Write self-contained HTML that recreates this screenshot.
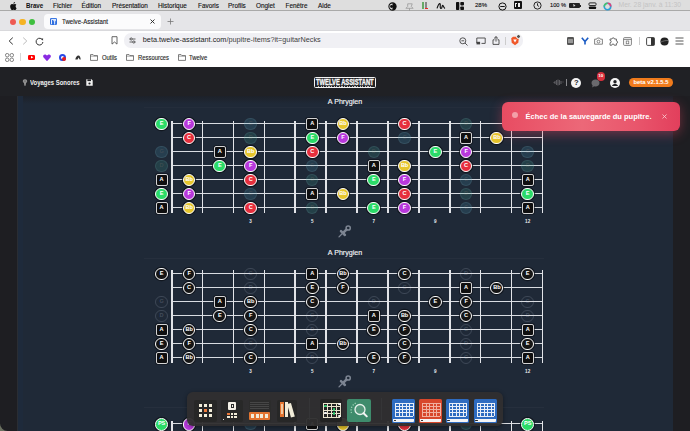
<!DOCTYPE html><html><head><meta charset="utf-8"><style>
*{margin:0;padding:0;box-sizing:border-box}
html,body{width:690px;height:431px;overflow:hidden;background:#1c1c1f;font-family:"Liberation Sans", sans-serif}
.a{position:absolute}
.str{position:absolute;height:1.1px;background:#d9dce1}
.fret{position:absolute;background:#e2e4e8}
.flab{position:absolute;width:20px;text-align:center;font-size:4.6px;font-weight:700;color:#e8eaee;line-height:8px}
.nt,.ghost,.ghost2,.sq{position:absolute;display:flex;align-items:center;justify-content:center;font-weight:700;color:#fff;font-size:5.6px;line-height:1;letter-spacing:-0.1px}
.nt{width:12.8px;height:12.8px;border-radius:50%;border:1px solid #fff;box-shadow:0 0 0 1.2px rgba(14,18,26,0.75)}
.sq{width:12.1px;height:12.1px;border-radius:2px;border:1.3px solid #d4d4d4;background:#0f0f10;box-shadow:0 0 0 1px rgba(14,18,26,0.6)}
.ghost{width:12.4px;height:12.4px;border-radius:50%;border:1px solid rgba(150,200,210,0.12);color:rgba(200,150,130,0.16)}
.ghost2{width:12.4px;height:12.4px;border-radius:50%;border:1px solid rgba(200,210,225,0.18);color:rgba(200,210,225,0.22)}
</style></head><body>

<div class="a" style="left:0;top:0;width:690px;height:10.6px;background:#dedede"></div>
<div class="a" style="left:0;top:10.4px;width:690px;height:0.8px;background:#a9a9a9"></div>
<svg class="a" style="left:9.5px;top:1.5px" width="7" height="8" viewBox="0 0 14 16"><path d="M11.2 8.5c0-2 1.6-2.9 1.7-3-.9-1.4-2.4-1.6-2.9-1.6-1.2-.1-2.4.7-3 .7-.6 0-1.6-.7-2.6-.7C3 4 1.7 4.8 1 6.1-.4 8.6.6 12.3 2 14.3c.7 1 1.5 2 2.5 2 1 0 1.4-.6 2.6-.6s1.5.6 2.6.6c1.1 0 1.8-1 2.4-2 .8-1.1 1.1-2.2 1.1-2.3 0 0-2-.8-2-3.5zM9.3 2.6C9.8 1.9 10.2 1 10.1 0c-.8 0-1.8.5-2.4 1.2-.5.6-1 1.5-.9 2.4.9.1 1.8-.4 2.5-1z" fill="#111"/></svg>
<div class="a" style="left:25.7px;top:2.48px;font-size:6.7px;line-height:8.04px;color:#111;font-weight:700;white-space:nowrap;transform:scaleX(0.93);transform-origin:0 50%">Brave</div>
<div class="a" style="left:53px;top:1.76px;font-size:6.4px;line-height:7.68px;color:#111;font-weight:400;white-space:nowrap;-webkit-text-stroke:0.12px #111">Fichier</div>
<div class="a" style="left:81.5px;top:1.76px;font-size:6.4px;line-height:7.68px;color:#111;font-weight:400;white-space:nowrap;-webkit-text-stroke:0.12px #111">Édition</div>
<div class="a" style="left:112px;top:1.76px;font-size:6.4px;line-height:7.68px;color:#111;font-weight:400;white-space:nowrap;-webkit-text-stroke:0.12px #111">Présentation</div>
<div class="a" style="left:158px;top:1.76px;font-size:6.4px;line-height:7.68px;color:#111;font-weight:400;white-space:nowrap;-webkit-text-stroke:0.12px #111">Historique</div>
<div class="a" style="left:198px;top:1.76px;font-size:6.4px;line-height:7.68px;color:#111;font-weight:400;white-space:nowrap;-webkit-text-stroke:0.12px #111">Favoris</div>
<div class="a" style="left:228px;top:1.76px;font-size:6.4px;line-height:7.68px;color:#111;font-weight:400;white-space:nowrap;-webkit-text-stroke:0.12px #111">Profils</div>
<div class="a" style="left:256px;top:1.76px;font-size:6.4px;line-height:7.68px;color:#111;font-weight:400;white-space:nowrap;-webkit-text-stroke:0.12px #111">Onglet</div>
<div class="a" style="left:285.5px;top:1.76px;font-size:6.4px;line-height:7.68px;color:#111;font-weight:400;white-space:nowrap;-webkit-text-stroke:0.12px #111">Fenêtre</div>
<div class="a" style="left:318px;top:1.76px;font-size:6.4px;line-height:7.68px;color:#111;font-weight:400;white-space:nowrap;-webkit-text-stroke:0.12px #111">Aide</div>
<svg class="a" style="left:388px;top:1.5px" width="9" height="9" viewBox="0 0 10 10"><circle cx="5" cy="5" r="4" fill="none" stroke="#111" stroke-width="1.2"/><path d="M5 1a4 4 0 0 1 0 8z" fill="#111"/><circle cx="4" cy="5" r="1.6" fill="#111"/></svg>
<svg class="a" style="left:405px;top:1.5px" width="9" height="9" viewBox="0 0 10 10"><path d="M3 2l5 0-1 3 2 2H1l2-2z M5 7v3" fill="none" stroke="#999" stroke-width="0.9"/></svg>
<div class="a" style="left:422px;top:2px;width:2px;height:7px;background:#6a6"></div><div class="a" style="left:425px;top:2px;width:2px;height:7px;background:#888"></div><div class="a" style="left:425px;top:7.5px;width:3px;height:1.5px;background:#e22"></div>
<svg class="a" style="left:436px;top:2px" width="10" height="8" viewBox="0 0 12 10"><path d="M1 8c1-3 2-6 3.5-6S4 8 6 8s1-4 2-4 1 3 3 4" fill="none" stroke="#111" stroke-width="1.4"/></svg>
<svg class="a" style="left:456px;top:2px" width="8" height="8" viewBox="0 0 8 8"><rect x="0" y="0" width="3.3" height="8" rx="0.8" fill="#111"/><rect x="4.3" y="0" width="3.7" height="3.4" rx="0.8" fill="#111"/><rect x="4.3" y="4.4" width="3.7" height="3.6" rx="0.8" fill="#111"/></svg>
<div class="a" style="left:475px;top:2.00px;font-size:6px;line-height:7.20px;color:#111;font-weight:400;white-space:nowrap;-webkit-text-stroke:0.12px #111">28%</div>
<svg class="a" style="left:498px;top:1.8px" width="9" height="9" viewBox="0 0 10 10"><circle cx="5" cy="5" r="4" fill="none" stroke="#111" stroke-width="1.1"/><path d="M2.5 5h5" stroke="#111" stroke-width="1.1"/></svg>
<div class="a" style="left:513.5px;top:1.4px;width:8px;height:7.6px;background:#111;border-radius:1px"></div><div class="a" style="left:515px;top:3.4px;width:2px;height:3.6px;border-left:0.8px solid #eee;border-top:0.8px solid #eee"></div><div class="a" style="left:518px;top:3.4px;width:2px;height:3.6px;border:0.8px solid #eee"></div>
<svg class="a" style="left:533px;top:1.2px" width="9" height="9" viewBox="0 0 10 10"><circle cx="5" cy="5" r="4" fill="none" stroke="#111" stroke-width="1"/><path d="M5 2.6V5l1.6 1" fill="none" stroke="#111" stroke-width="1"/></svg>
<div class="a" style="left:550px;top:2.18px;font-size:5.7px;line-height:6.84px;color:#111;font-weight:400;white-space:nowrap;-webkit-text-stroke:0.12px #111">100 %</div>
<div class="a" style="left:569px;top:2.8px;width:11px;height:5.4px;background:#222;border-radius:1px"></div><div class="a" style="left:572.5px;top:3.6px;width:3px;height:3.6px;background:#ddd;clip-path:polygon(60% 0,0 55%,45% 55%,35% 100%,100% 40%,55% 40%)"></div><div class="a" style="left:580.3px;top:4.6px;width:1px;height:2.2px;background:#222"></div>
<svg class="a" style="left:587.5px;top:1.8px" width="9" height="8" viewBox="0 0 10 9"><rect x="1" y="1" width="8" height="3" rx="1" fill="none" stroke="#111" stroke-width="1"/><rect x="1" y="5" width="8" height="3" rx="1" fill="#111"/></svg>
<svg class="a" style="left:602.5px;top:1.5px" width="9" height="9" viewBox="0 0 10 10"><circle cx="5" cy="5" r="3.6" fill="none" stroke="#2a9fd6" stroke-width="1.8"/><path d="M5 1.4A3.6 3.6 0 0 1 8.6 5" fill="none" stroke="#e0407a" stroke-width="1.8"/><path d="M1.4 5A3.6 3.6 0 0 1 5 1.4" fill="none" stroke="#46c46a" stroke-width="1.8"/></svg>
<div class="a" style="left:618.5px;top:1.32px;font-size:6.8px;line-height:8.16px;color:#c4c4c4;font-weight:400;white-space:nowrap;">Mer. 28 janv. à 11:30</div>
<div class="a" style="left:0;top:11.2px;width:690px;height:19.3px;background:#e5e5e8"></div>
<div class="a" style="left:9.9px;top:18.6px;width:6.2px;height:6.2px;border-radius:50%;background:#ee5a52"></div>
<div class="a" style="left:19.4px;top:18.6px;width:6.2px;height:6.2px;border-radius:50%;background:#f5b324"></div>
<div class="a" style="left:29.1px;top:18.6px;width:6.2px;height:6.2px;border-radius:50%;background:#3fbf3f"></div>
<div class="a" style="left:43.7px;top:14px;width:117px;height:15px;background:#fbfbfc;border-radius:4px 4px 4px 4px"></div>
<div class="a" style="left:49.8px;top:17.8px;width:7.6px;height:7.6px;background:#2f6fe0;border-radius:1.2px"></div>
<svg class="a" style="left:49.8px;top:17.8px" width="7.6" height="7.6" viewBox="0 0 8 8"><path d="M1.6 6.6V1.5h4.8M3.4 2.8h3M4.9 2.8v4" fill="none" stroke="#fff" stroke-width="0.95"/></svg>
<div class="a" style="left:61.5px;top:17.64px;font-size:6.6px;line-height:7.92px;color:#222;font-weight:400;white-space:nowrap;-webkit-text-stroke:0.12px #222;transform:scaleX(0.93);transform-origin:0 50%">Twelve-Assistant</div>
<svg class="a" style="left:150px;top:19.2px" width="5" height="5" viewBox="0 0 5 5"><path d="M0.5 0.5l4 4M4.5 0.5l-4 4" stroke="#222" stroke-width="0.9"/></svg>
<svg class="a" style="left:166.7px;top:18.2px" width="7" height="7" viewBox="0 0 7 7"><path d="M3.5 0.5v6M0.5 3.5h6" stroke="#777" stroke-width="0.8"/></svg>
<div class="a" style="left:0;top:30.5px;width:690px;height:36.5px;background:#ffffff"></div>
<div class="a" style="left:0;top:30.3px;width:690px;height:0.7px;background:#d9d9dc"></div>
<svg class="a" style="left:7.5px;top:36.8px" width="6" height="8" viewBox="0 0 6 8"><path d="M4.8 0.6L1.2 4l3.6 3.4" fill="none" stroke="#333" stroke-width="1"/></svg>
<svg class="a" style="left:22px;top:36.8px" width="6" height="8" viewBox="0 0 6 8"><path d="M1.2 0.6L4.8 4 1.2 7.4" fill="none" stroke="#bbb" stroke-width="1"/></svg>
<svg class="a" style="left:34.5px;top:36.5px" width="9" height="9" viewBox="0 0 9 9"><path d="M7.6 3.2A3.4 3.4 0 1 0 7.9 5" fill="none" stroke="#333" stroke-width="1"/><path d="M6.2 1.6L8.2 1.4 7.9 3.6z" fill="#333"/></svg>
<svg class="a" style="left:110.5px;top:36.3px" width="7" height="9" viewBox="0 0 7 9"><path d="M1 0.7h5v7.4L3.5 6 1 8.1z" fill="none" stroke="#555" stroke-width="0.9"/></svg>
<div class="a" style="left:124.4px;top:32.9px;width:399px;height:15.2px;background:#f0f0f4;border-radius:7px"></div>
<svg class="a" style="left:128.6px;top:37.3px" width="7" height="7" viewBox="0 0 7 7"><path d="M0.5 2h6M0.5 5h6" stroke="#444" stroke-width="0.8"/><circle cx="2.2" cy="2" r="1.1" fill="#f0f0f4" stroke="#444" stroke-width="0.8"/><circle cx="4.8" cy="5" r="1.1" fill="#f0f0f4" stroke="#444" stroke-width="0.8"/></svg>
<div class="a" style="left:142.8px;top:36.34px;font-size:7.27px;line-height:8.72px;color:#1c1c1c;font-weight:400;white-space:nowrap;">beta.twelve-assistant.com<span style="color:#404040">/pupitre-items?it=guitarNecks</span></div>
<svg class="a" style="left:459px;top:36.5px" width="9" height="9" viewBox="0 0 9 9"><circle cx="3.8" cy="3.8" r="3" fill="none" stroke="#444" stroke-width="0.9"/><path d="M6 6l2.5 2.5M2.4 3.8h2.8" stroke="#444" stroke-width="0.9"/></svg>
<svg class="a" style="left:475.5px;top:37px" width="10" height="8" viewBox="0 0 10 8"><path d="M0.8 6V1h8.4v5.4H5.5" fill="none" stroke="#444" stroke-width="0.9"/><rect x="0.5" y="4.8" width="3.6" height="2.6" fill="#444"/></svg>
<svg class="a" style="left:492px;top:36px" width="8" height="9" viewBox="0 0 8 9"><path d="M4 0.6v5M2 2.5L4 0.6 6 2.5M2.5 3.8H1v4.6h6V3.8H5.5" fill="none" stroke="#444" stroke-width="0.9"/></svg>
<div class="a" style="left:505px;top:37px;width:0.7px;height:8px;background:#ccc"></div>
<svg class="a" style="left:509.5px;top:35.5px" width="10" height="10" viewBox="0 0 10 10"><path d="M1.2 2.2L3 0.8h4l1.8 1.4-0.5 4.5L5 9.2 1.7 6.7z" fill="#f0582a"/><path d="M3.2 3.4h3.6L5 6.6z" fill="#fff"/></svg>
<div class="a" style="left:515.5px;top:34.2px;width:5px;height:5px;background:#555;border-radius:50%;border:0.6px solid #fff"></div>
<div class="a" style="left:566.5px;top:37px;width:7.5px;height:7.5px;background:#555;border-radius:1.3px"></div><div class="a" style="left:568px;top:38.5px;width:4.5px;height:4.5px;background:#999;border-radius:0.5px"></div>
<svg class="a" style="left:581px;top:37px" width="8" height="8" viewBox="0 0 8 8"><path d="M0.8 0.8L4 4.6 7.2 0.8M4 4.6V7.6" fill="none" stroke="#1a5bc4" stroke-width="1.6"/></svg>
<svg class="a" style="left:594px;top:37px" width="9" height="8" viewBox="0 0 9 8"><path d="M0.6 2.2h2l0.8-1.2h2.2l0.8 1.2h2v5H0.6z" fill="none" stroke="#666" stroke-width="0.8"/><circle cx="4.5" cy="4.6" r="1.4" fill="none" stroke="#666" stroke-width="0.8"/></svg>
<svg class="a" style="left:608.5px;top:36px" width="10" height="10" viewBox="0 0 10 10"><path d="M1 3h2a1.2 1.2 0 1 1 2.4 0h2v2a1.2 1.2 0 1 1 0 2.4V9.2H5.2a1.2 1.2 0 1 0-2.4 0H1V6.8a1.2 1.2 0 1 0 0-2.4z" fill="none" stroke="#555" stroke-width="0.85"/></svg>
<svg class="a" style="left:623px;top:36.6px" width="9" height="9" viewBox="0 0 9 9"><rect x="0.6" y="0.6" width="7.8" height="7.8" rx="1" fill="none" stroke="#666" stroke-width="0.8"/><path d="M0.6 2.4h7.8" stroke="#666" stroke-width="0.8"/><rect x="3.2" y="4" width="2.6" height="2.8" fill="none" stroke="#666" stroke-width="0.7"/></svg>
<div class="a" style="left:639px;top:37px;width:0.7px;height:8px;background:#ccc"></div>
<svg class="a" style="left:646px;top:36.6px" width="9" height="9" viewBox="0 0 9 9"><rect x="0.6" y="0.6" width="7.8" height="7.8" rx="1" fill="none" stroke="#333" stroke-width="0.9"/><rect x="5" y="0.6" width="3.4" height="7.8" fill="#333"/></svg>
<svg class="a" style="left:660px;top:36.5px" width="9" height="9" viewBox="0 0 9 9"><circle cx="4.5" cy="4.5" r="4.1" fill="#222"/><path d="M0.6 5.2C3 4 6 3.2 8.4 3.6" stroke="#aaa" stroke-width="0.5" fill="none"/></svg>
<svg class="a" style="left:674.5px;top:37px" width="9" height="8" viewBox="0 0 9 8"><path d="M0.5 1h8M0.5 4h8M0.5 7h8" stroke="#444" stroke-width="0.9"/></svg>
<svg class="a" style="left:5px;top:53px" width="9" height="9" viewBox="0 0 9 9"><g fill="none" stroke="#666" stroke-width="0.8"><rect x="0.5" y="0.5" width="3.4" height="3.4" rx="1.5"/><rect x="5.1" y="0.5" width="3.4" height="3.4" rx="1.5"/><rect x="0.5" y="5.1" width="3.4" height="3.4" rx="1.5"/><rect x="5.1" y="5.1" width="3.4" height="3.4" rx="1.5"/></g></svg>
<div class="a" style="left:20.2px;top:53px;width:0.6px;height:8px;background:#d6d6d6"></div>
<div class="a" style="left:27.8px;top:55px;width:7.6px;height:5px;background:#f00;border-radius:1.3px"></div><svg class="a" style="left:30.6px;top:56.3px" width="3" height="3" viewBox="0 0 3 3"><path d="M0 0l2.4 1.3L0 2.6z" fill="#fff"/></svg>
<svg class="a" style="left:43px;top:53.8px" width="8" height="7.5" viewBox="0 0 8 7.5"><path d="M4 7.2L0.6 3.6C-0.4 2 0.4 0.4 1.9 0.4 2.9 0.4 3.6 1 4 1.6 4.4 1 5.1 0.4 6.1 0.4 7.6 0.4 8.4 2 7.4 3.6z" fill="#8a2be2"/></svg>
<div class="a" style="left:58.6px;top:53.8px;width:7.4px;height:7.4px;border-radius:50%;border:2px solid #2848e8"></div><div class="a" style="left:61.8px;top:56.8px;width:4.4px;height:4.4px;border-radius:50%;background:#e51c1c"></div>
<svg class="a" style="left:74.8px;top:55px" width="6" height="5" viewBox="0 0 6 5"><path d="M0.3 4.6C0.6 2 2 0.4 3.4 0.4S5.6 2 5.7 4.6H4.6L3.6 2.4 2.6 4.6z" fill="#333"/></svg>
<svg class="a" style="left:90px;top:54.2px" width="8" height="7" viewBox="0 0 8 7"><path d="M0.5 0.6h2.6l0.8 1h3.6v4.8H0.5z" fill="none" stroke="#555" stroke-width="0.75"/><path d="M0.5 2.2h7" stroke="#555" stroke-width="0.5"/></svg>
<div class="a" style="left:101.9px;top:54.16px;font-size:6.4px;line-height:7.68px;color:#262626;font-weight:400;white-space:nowrap;-webkit-text-stroke:0.12px #262626;transform:scaleX(0.92);transform-origin:0 50%">Outils</div>
<svg class="a" style="left:126px;top:54.2px" width="8" height="7" viewBox="0 0 8 7"><path d="M0.5 0.6h2.6l0.8 1h3.6v4.8H0.5z" fill="none" stroke="#555" stroke-width="0.75"/><path d="M0.5 2.2h7" stroke="#555" stroke-width="0.5"/></svg>
<div class="a" style="left:137.7px;top:54.16px;font-size:6.4px;line-height:7.68px;color:#262626;font-weight:400;white-space:nowrap;-webkit-text-stroke:0.12px #262626;transform:scaleX(0.92);transform-origin:0 50%">Ressources</div>
<svg class="a" style="left:177.5px;top:54.2px" width="8" height="7" viewBox="0 0 8 7"><path d="M0.5 0.6h2.6l0.8 1h3.6v4.8H0.5z" fill="none" stroke="#555" stroke-width="0.75"/><path d="M0.5 2.2h7" stroke="#555" stroke-width="0.5"/></svg>
<div class="a" style="left:189.3px;top:54.16px;font-size:6.4px;line-height:7.68px;color:#262626;font-weight:400;white-space:nowrap;-webkit-text-stroke:0.12px #262626;transform:scaleX(0.92);transform-origin:0 50%">Twelve</div>
<div class="a" style="left:0;top:66.6px;width:690px;height:0.9px;background:#0e0e10"></div>

<div class="a" style="left:0;top:67px;width:690px;height:364px;background:#1e1e22"></div>
<div class="a" style="left:0;top:67px;width:690px;height:29px;background:#202125"></div>
<div class="a" style="left:17px;top:96px;width:655.5px;height:335px;background:#1f2937"></div>
<div class="a" style="left:17px;top:96px;width:655.5px;height:8px;background:linear-gradient(180deg,#1d2129,rgba(31,41,55,0))"></div>
<div class="a" style="left:16.5px;top:96px;width:1.5px;height:335px;background:#2a2d33"></div>
<div class="a" style="left:18px;top:96px;width:4.5px;height:335px;background:#1e2a3b"></div>
<div class="a" style="left:143.5px;top:107.2px;width:400px;height:0.9px;background:#242d3b"></div>
<div class="a" style="left:143.5px;top:257.9px;width:400px;height:0.9px;background:#262f3d"></div>
<div class="a" style="left:144px;top:407.2px;width:400px;height:0.9px;background:#262f3d"></div>

<div class="a" style="left:0;top:99.2px;width:690px;text-align:center;font-size:7.1px;color:#f2f3f5;-webkit-text-stroke:0.15px #f2f3f5;line-height:7px">A Phrygien</div>
<div class="str" style="top:123.00px;left:171.70px;width:370.68px"></div>
<div class="str" style="top:137.00px;left:171.70px;width:370.68px"></div>
<div class="str" style="top:151.00px;left:171.70px;width:370.68px"></div>
<div class="str" style="top:165.00px;left:171.70px;width:370.68px"></div>
<div class="str" style="top:179.00px;left:171.70px;width:370.68px"></div>
<div class="str" style="top:193.00px;left:171.70px;width:370.68px"></div>
<div class="str" style="top:207.00px;left:171.70px;width:370.68px"></div>
<div class="fret" style="left:170.80px;top:120.50px;height:92.20px;width:1.8px"></div>
<div class="fret" style="left:201.79px;top:120.50px;height:92.20px;width:1.6px"></div>
<div class="fret" style="left:232.68px;top:120.50px;height:92.20px;width:1.6px"></div>
<div class="fret" style="left:263.57px;top:120.50px;height:92.20px;width:1.6px"></div>
<div class="fret" style="left:294.46px;top:120.50px;height:92.20px;width:1.6px"></div>
<div class="fret" style="left:325.35px;top:120.50px;height:92.20px;width:1.6px"></div>
<div class="fret" style="left:356.24px;top:120.50px;height:92.20px;width:1.6px"></div>
<div class="fret" style="left:387.13px;top:120.50px;height:92.20px;width:1.6px"></div>
<div class="fret" style="left:418.02px;top:120.50px;height:92.20px;width:1.6px"></div>
<div class="fret" style="left:448.91px;top:120.50px;height:92.20px;width:1.6px"></div>
<div class="fret" style="left:479.80px;top:120.50px;height:92.20px;width:1.6px"></div>
<div class="fret" style="left:510.69px;top:120.50px;height:92.20px;width:1.6px"></div>
<div class="fret" style="left:541.58px;top:120.50px;height:92.20px;width:1.6px"></div>
<div class="flab" style="left:240.64px;top:217.70px">3</div>
<div class="flab" style="left:302.20px;top:217.70px">5</div>
<div class="flab" style="left:363.76px;top:217.70px">7</div>
<div class="flab" style="left:425.32px;top:217.70px">9</div>
<div class="flab" style="left:517.66px;top:217.70px">12</div>
<div class="nt" style="left:155.20px;top:117.70px;background:#2bdb68"><span>E</span></div>
<div class="nt" style="left:182.68px;top:117.70px;background:#b838dc"><span>F</span></div>
<div class="ghost" style="left:244.44px;top:117.90px;background:rgba(70,150,175,0.2)"><span>G</span></div>
<div class="sq" style="left:306.15px;top:118.05px"><span>A</span></div>
<div class="nt" style="left:336.58px;top:117.70px;background:#e6c52b"><span>Bb</span></div>
<div class="nt" style="left:398.14px;top:117.70px;background:#e62f3d"><span>C</span></div>
<div class="ghost" style="left:459.90px;top:117.90px;background:rgba(60,160,140,0.2)"><span>D</span></div>
<div class="nt" style="left:521.26px;top:117.70px;background:#2bdb68"><span>E</span></div>
<div class="nt" style="left:182.68px;top:131.70px;background:#e62f3d"><span>C</span></div>
<div class="ghost" style="left:244.44px;top:131.90px;background:rgba(60,160,140,0.2)"><span>D</span></div>
<div class="nt" style="left:305.80px;top:131.70px;background:#2bdb68"><span>E</span></div>
<div class="nt" style="left:336.58px;top:131.70px;background:#b838dc"><span>F</span></div>
<div class="ghost" style="left:398.34px;top:131.90px;background:rgba(70,150,175,0.2)"><span>G</span></div>
<div class="sq" style="left:460.05px;top:132.05px"><span>A</span></div>
<div class="nt" style="left:490.48px;top:131.70px;background:#e6c52b"><span>Bb</span></div>
<div class="ghost" style="left:155.40px;top:145.90px;background:rgba(70,150,175,0.2)"><span>G</span></div>
<div class="sq" style="left:213.81px;top:146.05px"><span>A</span></div>
<div class="nt" style="left:244.24px;top:145.70px;background:#e6c52b"><span>Bb</span></div>
<div class="nt" style="left:305.80px;top:145.70px;background:#e62f3d"><span>C</span></div>
<div class="ghost" style="left:367.56px;top:145.90px;background:rgba(60,160,140,0.2)"><span>D</span></div>
<div class="nt" style="left:428.92px;top:145.70px;background:#2bdb68"><span>E</span></div>
<div class="nt" style="left:459.70px;top:145.70px;background:#b838dc"><span>F</span></div>
<div class="ghost" style="left:521.46px;top:145.90px;background:rgba(70,150,175,0.2)"><span>G</span></div>
<div class="ghost" style="left:155.40px;top:159.90px;background:rgba(60,160,140,0.2)"><span>D</span></div>
<div class="nt" style="left:213.46px;top:159.70px;background:#2bdb68"><span>E</span></div>
<div class="nt" style="left:244.24px;top:159.70px;background:#b838dc"><span>F</span></div>
<div class="ghost" style="left:306.00px;top:159.90px;background:rgba(70,150,175,0.2)"><span>G</span></div>
<div class="sq" style="left:367.71px;top:160.05px"><span>A</span></div>
<div class="nt" style="left:398.14px;top:159.70px;background:#e6c52b"><span>Bb</span></div>
<div class="nt" style="left:459.70px;top:159.70px;background:#e62f3d"><span>C</span></div>
<div class="ghost" style="left:521.46px;top:159.90px;background:rgba(60,160,140,0.2)"><span>D</span></div>
<div class="sq" style="left:155.55px;top:174.05px"><span>A</span></div>
<div class="nt" style="left:182.68px;top:173.70px;background:#e6c52b"><span>Bb</span></div>
<div class="nt" style="left:244.24px;top:173.70px;background:#e62f3d"><span>C</span></div>
<div class="ghost" style="left:306.00px;top:173.90px;background:rgba(60,160,140,0.2)"><span>D</span></div>
<div class="nt" style="left:367.36px;top:173.70px;background:#2bdb68"><span>E</span></div>
<div class="nt" style="left:398.14px;top:173.70px;background:#b838dc"><span>F</span></div>
<div class="ghost" style="left:459.90px;top:173.90px;background:rgba(70,150,175,0.2)"><span>G</span></div>
<div class="sq" style="left:521.61px;top:174.05px"><span>A</span></div>
<div class="nt" style="left:155.20px;top:187.70px;background:#2bdb68"><span>E</span></div>
<div class="nt" style="left:182.68px;top:187.70px;background:#b838dc"><span>F</span></div>
<div class="ghost" style="left:244.44px;top:187.90px;background:rgba(70,150,175,0.2)"><span>G</span></div>
<div class="sq" style="left:306.15px;top:188.05px"><span>A</span></div>
<div class="nt" style="left:336.58px;top:187.70px;background:#e6c52b"><span>Bb</span></div>
<div class="nt" style="left:398.14px;top:187.70px;background:#e62f3d"><span>C</span></div>
<div class="ghost" style="left:459.90px;top:187.90px;background:rgba(60,160,140,0.2)"><span>D</span></div>
<div class="nt" style="left:521.26px;top:187.70px;background:#2bdb68"><span>E</span></div>
<div class="sq" style="left:155.55px;top:202.05px"><span>A</span></div>
<div class="nt" style="left:182.68px;top:201.70px;background:#e6c52b"><span>Bb</span></div>
<div class="nt" style="left:244.24px;top:201.70px;background:#e62f3d"><span>C</span></div>
<div class="ghost" style="left:306.00px;top:201.90px;background:rgba(60,160,140,0.2)"><span>D</span></div>
<div class="nt" style="left:367.36px;top:201.70px;background:#2bdb68"><span>E</span></div>
<div class="nt" style="left:398.14px;top:201.70px;background:#b838dc"><span>F</span></div>
<div class="ghost" style="left:459.90px;top:201.90px;background:rgba(70,150,175,0.2)"><span>G</span></div>
<div class="sq" style="left:521.61px;top:202.05px"><span>A</span></div>
<div class="a" style="left:0;top:250px;width:690px;text-align:center;font-size:7.1px;color:#f2f3f5;-webkit-text-stroke:0.15px #f2f3f5;line-height:7px">A Phrygien</div>
<div class="str" style="top:272.90px;left:171.70px;width:370.68px"></div>
<div class="str" style="top:286.90px;left:171.70px;width:370.68px"></div>
<div class="str" style="top:300.90px;left:171.70px;width:370.68px"></div>
<div class="str" style="top:314.90px;left:171.70px;width:370.68px"></div>
<div class="str" style="top:328.90px;left:171.70px;width:370.68px"></div>
<div class="str" style="top:342.90px;left:171.70px;width:370.68px"></div>
<div class="str" style="top:356.90px;left:171.70px;width:370.68px"></div>
<div class="fret" style="left:170.80px;top:270.40px;height:92.20px;width:1.8px"></div>
<div class="fret" style="left:201.79px;top:270.40px;height:92.20px;width:1.6px"></div>
<div class="fret" style="left:232.68px;top:270.40px;height:92.20px;width:1.6px"></div>
<div class="fret" style="left:263.57px;top:270.40px;height:92.20px;width:1.6px"></div>
<div class="fret" style="left:294.46px;top:270.40px;height:92.20px;width:1.6px"></div>
<div class="fret" style="left:325.35px;top:270.40px;height:92.20px;width:1.6px"></div>
<div class="fret" style="left:356.24px;top:270.40px;height:92.20px;width:1.6px"></div>
<div class="fret" style="left:387.13px;top:270.40px;height:92.20px;width:1.6px"></div>
<div class="fret" style="left:418.02px;top:270.40px;height:92.20px;width:1.6px"></div>
<div class="fret" style="left:448.91px;top:270.40px;height:92.20px;width:1.6px"></div>
<div class="fret" style="left:479.80px;top:270.40px;height:92.20px;width:1.6px"></div>
<div class="fret" style="left:510.69px;top:270.40px;height:92.20px;width:1.6px"></div>
<div class="fret" style="left:541.58px;top:270.40px;height:92.20px;width:1.6px"></div>
<div class="flab" style="left:240.64px;top:367.60px">3</div>
<div class="flab" style="left:302.20px;top:367.60px">5</div>
<div class="flab" style="left:363.76px;top:367.60px">7</div>
<div class="flab" style="left:425.32px;top:367.60px">9</div>
<div class="flab" style="left:517.66px;top:367.60px">12</div>
<div class="nt" style="left:155.20px;top:267.60px;background:#151515"><span>E</span></div>
<div class="nt" style="left:182.68px;top:267.60px;background:#151515"><span>F</span></div>
<div class="ghost2" style="left:244.44px;top:267.80px"><span>G</span></div>
<div class="sq" style="left:306.15px;top:267.95px"><span>A</span></div>
<div class="nt" style="left:336.58px;top:267.60px;background:#151515"><span>Bb</span></div>
<div class="nt" style="left:398.14px;top:267.60px;background:#151515"><span>C</span></div>
<div class="ghost2" style="left:459.90px;top:267.80px"><span>D</span></div>
<div class="nt" style="left:521.26px;top:267.60px;background:#151515"><span>E</span></div>
<div class="nt" style="left:182.68px;top:281.60px;background:#151515"><span>C</span></div>
<div class="ghost2" style="left:244.44px;top:281.80px"><span>D</span></div>
<div class="nt" style="left:305.80px;top:281.60px;background:#151515"><span>E</span></div>
<div class="nt" style="left:336.58px;top:281.60px;background:#151515"><span>F</span></div>
<div class="ghost2" style="left:398.34px;top:281.80px"><span>G</span></div>
<div class="sq" style="left:460.05px;top:281.95px"><span>A</span></div>
<div class="nt" style="left:490.48px;top:281.60px;background:#151515"><span>Bb</span></div>
<div class="ghost2" style="left:155.40px;top:295.80px"><span>G</span></div>
<div class="sq" style="left:213.81px;top:295.95px"><span>A</span></div>
<div class="nt" style="left:244.24px;top:295.60px;background:#151515"><span>Bb</span></div>
<div class="nt" style="left:305.80px;top:295.60px;background:#151515"><span>C</span></div>
<div class="ghost2" style="left:367.56px;top:295.80px"><span>D</span></div>
<div class="nt" style="left:428.92px;top:295.60px;background:#151515"><span>E</span></div>
<div class="nt" style="left:459.70px;top:295.60px;background:#151515"><span>F</span></div>
<div class="ghost2" style="left:521.46px;top:295.80px"><span>G</span></div>
<div class="ghost2" style="left:155.40px;top:309.80px"><span>D</span></div>
<div class="nt" style="left:213.46px;top:309.60px;background:#151515"><span>E</span></div>
<div class="nt" style="left:244.24px;top:309.60px;background:#151515"><span>F</span></div>
<div class="ghost2" style="left:306.00px;top:309.80px"><span>G</span></div>
<div class="sq" style="left:367.71px;top:309.95px"><span>A</span></div>
<div class="nt" style="left:398.14px;top:309.60px;background:#151515"><span>Bb</span></div>
<div class="nt" style="left:459.70px;top:309.60px;background:#151515"><span>C</span></div>
<div class="ghost2" style="left:521.46px;top:309.80px"><span>D</span></div>
<div class="sq" style="left:155.55px;top:323.95px"><span>A</span></div>
<div class="nt" style="left:182.68px;top:323.60px;background:#151515"><span>Bb</span></div>
<div class="nt" style="left:244.24px;top:323.60px;background:#151515"><span>C</span></div>
<div class="ghost2" style="left:306.00px;top:323.80px"><span>D</span></div>
<div class="nt" style="left:367.36px;top:323.60px;background:#151515"><span>E</span></div>
<div class="nt" style="left:398.14px;top:323.60px;background:#151515"><span>F</span></div>
<div class="ghost2" style="left:459.90px;top:323.80px"><span>G</span></div>
<div class="sq" style="left:521.61px;top:323.95px"><span>A</span></div>
<div class="nt" style="left:155.20px;top:337.60px;background:#151515"><span>E</span></div>
<div class="nt" style="left:182.68px;top:337.60px;background:#151515"><span>F</span></div>
<div class="ghost2" style="left:244.44px;top:337.80px"><span>G</span></div>
<div class="sq" style="left:306.15px;top:337.95px"><span>A</span></div>
<div class="nt" style="left:336.58px;top:337.60px;background:#151515"><span>Bb</span></div>
<div class="nt" style="left:398.14px;top:337.60px;background:#151515"><span>C</span></div>
<div class="ghost2" style="left:459.90px;top:337.80px"><span>D</span></div>
<div class="nt" style="left:521.26px;top:337.60px;background:#151515"><span>E</span></div>
<div class="sq" style="left:155.55px;top:351.95px"><span>A</span></div>
<div class="nt" style="left:182.68px;top:351.60px;background:#151515"><span>Bb</span></div>
<div class="nt" style="left:244.24px;top:351.60px;background:#151515"><span>C</span></div>
<div class="ghost2" style="left:306.00px;top:351.80px"><span>D</span></div>
<div class="nt" style="left:367.36px;top:351.60px;background:#151515"><span>E</span></div>
<div class="nt" style="left:398.14px;top:351.60px;background:#151515"><span>F</span></div>
<div class="ghost2" style="left:459.90px;top:351.80px"><span>G</span></div>
<div class="sq" style="left:521.61px;top:351.95px"><span>A</span></div>
<div class="str" style="top:423.20px;left:171.70px;width:370.68px"></div>
<div class="str" style="top:437.20px;left:171.70px;width:370.68px"></div>
<div class="str" style="top:451.20px;left:171.70px;width:370.68px"></div>
<div class="str" style="top:465.20px;left:171.70px;width:370.68px"></div>
<div class="str" style="top:479.20px;left:171.70px;width:370.68px"></div>
<div class="str" style="top:493.20px;left:171.70px;width:370.68px"></div>
<div class="str" style="top:507.20px;left:171.70px;width:370.68px"></div>
<div class="fret" style="left:170.80px;top:420.70px;height:92.20px;width:1.8px"></div>
<div class="fret" style="left:201.79px;top:420.70px;height:92.20px;width:1.6px"></div>
<div class="fret" style="left:232.68px;top:420.70px;height:92.20px;width:1.6px"></div>
<div class="fret" style="left:263.57px;top:420.70px;height:92.20px;width:1.6px"></div>
<div class="fret" style="left:294.46px;top:420.70px;height:92.20px;width:1.6px"></div>
<div class="fret" style="left:325.35px;top:420.70px;height:92.20px;width:1.6px"></div>
<div class="fret" style="left:356.24px;top:420.70px;height:92.20px;width:1.6px"></div>
<div class="fret" style="left:387.13px;top:420.70px;height:92.20px;width:1.6px"></div>
<div class="fret" style="left:418.02px;top:420.70px;height:92.20px;width:1.6px"></div>
<div class="fret" style="left:448.91px;top:420.70px;height:92.20px;width:1.6px"></div>
<div class="fret" style="left:479.80px;top:420.70px;height:92.20px;width:1.6px"></div>
<div class="fret" style="left:510.69px;top:420.70px;height:92.20px;width:1.6px"></div>
<div class="fret" style="left:541.58px;top:420.70px;height:92.20px;width:1.6px"></div>
<div class="flab" style="left:240.64px;top:517.90px">3</div>
<div class="flab" style="left:302.20px;top:517.90px">5</div>
<div class="flab" style="left:363.76px;top:517.90px">7</div>
<div class="flab" style="left:425.32px;top:517.90px">9</div>
<div class="flab" style="left:517.66px;top:517.90px">12</div>
<div class="nt" style="left:155.20px;top:417.90px;background:#2bdb68"><span>PS</span></div>
<div class="nt" style="left:182.68px;top:417.90px;background:#b838dc"><span>F</span></div>
<div class="ghost" style="left:244.44px;top:418.10px;background:rgba(70,150,175,0.2)"><span>G</span></div>
<div class="sq" style="left:306.15px;top:418.25px"><span>A</span></div>
<div class="nt" style="left:336.58px;top:417.90px;background:#e6c52b"><span>Bb</span></div>
<div class="nt" style="left:398.14px;top:417.90px;background:#e62f3d"><span>C</span></div>
<div class="ghost" style="left:459.90px;top:418.10px;background:rgba(60,160,140,0.2)"><span>D</span></div>
<div class="nt" style="left:521.26px;top:417.90px;background:#2bdb68"><span>PS</span></div>
<div class="nt" style="left:182.68px;top:431.90px;background:#e62f3d"><span>C</span></div>
<div class="ghost" style="left:244.44px;top:432.10px;background:rgba(60,160,140,0.2)"><span>D</span></div>
<div class="nt" style="left:305.80px;top:431.90px;background:#2bdb68"><span>PS</span></div>
<div class="nt" style="left:336.58px;top:431.90px;background:#b838dc"><span>F</span></div>
<div class="ghost" style="left:398.34px;top:432.10px;background:rgba(70,150,175,0.2)"><span>G</span></div>
<div class="sq" style="left:460.05px;top:432.25px"><span>A</span></div>
<div class="nt" style="left:490.48px;top:431.90px;background:#e6c52b"><span>Bb</span></div>
<div class="ghost" style="left:155.40px;top:446.10px;background:rgba(70,150,175,0.2)"><span>G</span></div>
<div class="sq" style="left:213.81px;top:446.25px"><span>A</span></div>
<div class="nt" style="left:244.24px;top:445.90px;background:#e6c52b"><span>Bb</span></div>
<div class="nt" style="left:305.80px;top:445.90px;background:#e62f3d"><span>C</span></div>
<div class="ghost" style="left:367.56px;top:446.10px;background:rgba(60,160,140,0.2)"><span>D</span></div>
<div class="nt" style="left:428.92px;top:445.90px;background:#2bdb68"><span>PS</span></div>
<div class="nt" style="left:459.70px;top:445.90px;background:#b838dc"><span>F</span></div>
<div class="ghost" style="left:521.46px;top:446.10px;background:rgba(70,150,175,0.2)"><span>G</span></div>
<div class="ghost" style="left:155.40px;top:460.10px;background:rgba(60,160,140,0.2)"><span>D</span></div>
<div class="nt" style="left:213.46px;top:459.90px;background:#2bdb68"><span>PS</span></div>
<div class="nt" style="left:244.24px;top:459.90px;background:#b838dc"><span>F</span></div>
<div class="ghost" style="left:306.00px;top:460.10px;background:rgba(70,150,175,0.2)"><span>G</span></div>
<div class="sq" style="left:367.71px;top:460.25px"><span>A</span></div>
<div class="nt" style="left:398.14px;top:459.90px;background:#e6c52b"><span>Bb</span></div>
<div class="nt" style="left:459.70px;top:459.90px;background:#e62f3d"><span>C</span></div>
<div class="ghost" style="left:521.46px;top:460.10px;background:rgba(60,160,140,0.2)"><span>D</span></div>
<div class="sq" style="left:155.55px;top:474.25px"><span>A</span></div>
<div class="nt" style="left:182.68px;top:473.90px;background:#e6c52b"><span>Bb</span></div>
<div class="nt" style="left:244.24px;top:473.90px;background:#e62f3d"><span>C</span></div>
<div class="ghost" style="left:306.00px;top:474.10px;background:rgba(60,160,140,0.2)"><span>D</span></div>
<div class="nt" style="left:367.36px;top:473.90px;background:#2bdb68"><span>PS</span></div>
<div class="nt" style="left:398.14px;top:473.90px;background:#b838dc"><span>F</span></div>
<div class="ghost" style="left:459.90px;top:474.10px;background:rgba(70,150,175,0.2)"><span>G</span></div>
<div class="sq" style="left:521.61px;top:474.25px"><span>A</span></div>
<div class="nt" style="left:155.20px;top:487.90px;background:#2bdb68"><span>PS</span></div>
<div class="nt" style="left:182.68px;top:487.90px;background:#b838dc"><span>F</span></div>
<div class="ghost" style="left:244.44px;top:488.10px;background:rgba(70,150,175,0.2)"><span>G</span></div>
<div class="sq" style="left:306.15px;top:488.25px"><span>A</span></div>
<div class="nt" style="left:336.58px;top:487.90px;background:#e6c52b"><span>Bb</span></div>
<div class="nt" style="left:398.14px;top:487.90px;background:#e62f3d"><span>C</span></div>
<div class="ghost" style="left:459.90px;top:488.10px;background:rgba(60,160,140,0.2)"><span>D</span></div>
<div class="nt" style="left:521.26px;top:487.90px;background:#2bdb68"><span>PS</span></div>
<div class="sq" style="left:155.55px;top:502.25px"><span>A</span></div>
<div class="nt" style="left:182.68px;top:501.90px;background:#e6c52b"><span>Bb</span></div>
<div class="nt" style="left:244.24px;top:501.90px;background:#e62f3d"><span>C</span></div>
<div class="ghost" style="left:306.00px;top:502.10px;background:rgba(60,160,140,0.2)"><span>D</span></div>
<div class="nt" style="left:367.36px;top:501.90px;background:#2bdb68"><span>PS</span></div>
<div class="nt" style="left:398.14px;top:501.90px;background:#b838dc"><span>F</span></div>
<div class="ghost" style="left:459.90px;top:502.10px;background:rgba(70,150,175,0.2)"><span>G</span></div>
<div class="sq" style="left:521.61px;top:502.25px"><span>A</span></div>
<svg class="a" style="left:21.5px;top:78.8px" width="6" height="7" viewBox="0 0 6 7"><path d="M3 0.3C1.6 0.3 0.8 1.2 0.8 2.2 0.8 3 1.4 3.6 2 3.8L2.4 6.8h1.2L4 3.8C4.6 3.6 5.2 3 5.2 2.2 5.2 1.2 4.4 0.3 3 0.3z" fill="#9a9a9a"/><path d="M1.4 2.2h3.2M3 1v2.6" stroke="#555" stroke-width="0.4"/></svg>
<div class="a" style="left:29.5px;top:79.19px;font-size:6.35px;line-height:7.62px;color:#f0f0f0;font-weight:700;white-space:nowrap;transform:scaleX(0.94);transform-origin:0 50%">Voyages Sonores</div>
<svg class="a" style="left:86.2px;top:79.1px" width="7" height="7" viewBox="0 0 7 7"><path d="M0.3 0.3h5.2L6.7 1.5v5.2H0.3z" fill="#f2f2f2"/><rect x="1.4" y="0.3" width="3.6" height="1.8" fill="#202124"/><circle cx="3.5" cy="4.5" r="1.1" fill="#202124"/></svg>
<div class="a" style="left:314.1px;top:76.5px;width:61.8px;height:11.6px;border:1.2px solid #f2f2f2;border-radius:1.5px"></div>
<div class="a" style="left:316.4px;top:77.6px;width:90px;font-size:8.3px;line-height:8px;font-weight:700;color:#f6f6f6;transform:scaleX(0.70);transform-origin:0 0;white-space:nowrap;-webkit-text-stroke:0.35px #f6f6f6">TWELVE ASSISTANT</div>
<div class="a" style="left:318px;top:86px;width:55px;height:0.9px;background:repeating-linear-gradient(90deg,#bbb 0 1.3px,transparent 1.3px 2.6px)"></div>
<svg class="a" style="left:553px;top:79px" width="11" height="7" viewBox="0 0 11 7"><path d="M0.5 3.5h1M2 2v3M3.5 1v5M5 0.4v6.2M6.5 1v5M8 2v3M9.5 3h1" stroke="#5c5c60" stroke-width="1.1"/></svg>
<div class="a" style="left:566.3px;top:79px;width:0.9px;height:7px;background:#8a8a8e"></div>
<div class="a" style="left:571.4px;top:77.6px;width:10px;height:10px;border-radius:50%;background:#f4f4f4"></div>
<div class="a" style="left:571.4px;top:78.1px;width:10px;text-align:center;font-size:7.6px;line-height:9px;font-weight:700;color:#202124">?</div>
<svg class="a" style="left:591px;top:79px" width="9" height="9" viewBox="0 0 9 9"><path d="M4.5 0.6C2.2 0.6 0.5 2.1 0.5 4c0 1 0.4 1.8 1.1 2.4L1.1 8.4 3.2 7.3c0.4 0.1 0.8 0.2 1.3 0.2 2.3 0 4-1.5 4-3.5S6.8 0.6 4.5 0.6z" fill="#6a6a6e"/></svg>
<div class="a" style="left:596.6px;top:72.4px;width:8.4px;height:8.4px;border-radius:50%;background:#d9313d"></div>
<div class="a" style="left:596.6px;top:74.3px;width:8.4px;text-align:center;font-size:4.4px;line-height:4.6px;font-weight:700;color:#fff">10</div>
<svg class="a" style="left:610px;top:77.6px" width="10" height="10" viewBox="0 0 10 10"><circle cx="5" cy="5" r="5" fill="#f4f4f4"/><circle cx="5" cy="3.8" r="1.7" fill="#202124"/><path d="M1.9 8C2.6 6.6 3.6 6.1 5 6.1S7.4 6.6 8.1 8z" fill="#202124"/></svg>
<div class="a" style="left:628.8px;top:78.1px;width:44.4px;height:8.8px;border-radius:4.4px;background:#f07b1c"></div>
<div class="a" style="left:628.8px;top:78.6px;width:44.4px;text-align:center;font-size:5.9px;line-height:7.8px;font-weight:700;color:#fff">beta v2.1.5.5</div>
<svg class="a" style="left:336px;top:221.5px" width="18" height="18" viewBox="0 0 18 18"><g fill="none" stroke="#7d8592" stroke-linecap="round">
<path d="M3 14.9L6.4 11.5" stroke-width="1.3"/>
<path d="M5 9.2L8.9 13" stroke-width="2.5"/>
<path d="M7.6 10.4L10.4 7.6" stroke-width="2.6"/>
<circle cx="12.2" cy="6" r="2.1" stroke-width="1.5"/>
</g></svg>
<svg class="a" style="left:336px;top:371.8px" width="18" height="18" viewBox="0 0 18 18"><g fill="none" stroke="#7d8592" stroke-linecap="round">
<path d="M3 14.9L6.4 11.5" stroke-width="1.3"/>
<path d="M5 9.2L8.9 13" stroke-width="2.5"/>
<path d="M7.6 10.4L10.4 7.6" stroke-width="2.6"/>
<circle cx="12.2" cy="6" r="2.1" stroke-width="1.5"/>
</g></svg>
<div class="a" style="left:187px;top:392px;width:316px;height:33.6px;background:rgba(48,47,48,0.96);border-radius:6px;box-shadow:0 1px 4px rgba(0,0,0,0.4)"></div>
<div class="a" style="left:194px;top:399.5px;width:23px;height:22.5px;background:#272727;border-radius:2px"></div>
<div class="a" style="left:198.5px;top:403.9px;width:3px;height:3px;background:#f1ecd9"></div>
<div class="a" style="left:203.7px;top:403.9px;width:3px;height:3px;background:#f1ecd9"></div>
<div class="a" style="left:208.9px;top:403.9px;width:3px;height:3px;background:#f1ecd9"></div>
<div class="a" style="left:198.5px;top:408.9px;width:3px;height:3px;background:#f1ecd9"></div>
<div class="a" style="left:203.7px;top:408.9px;width:3px;height:3px;background:#ec7a3c"></div>
<div class="a" style="left:208.9px;top:408.9px;width:3px;height:3px;background:#f1ecd9"></div>
<div class="a" style="left:198.5px;top:413.9px;width:3px;height:3px;background:#f1ecd9"></div>
<div class="a" style="left:203.7px;top:413.9px;width:3px;height:3px;background:#f1ecd9"></div>
<div class="a" style="left:208.9px;top:413.9px;width:3px;height:3px;background:#f1ecd9"></div>
<div class="a" style="left:221px;top:399.5px;width:22px;height:22.5px;background:#282828;border-radius:2px"></div>
<div class="a" style="left:228.4px;top:402.4px;width:8px;height:8px;background:#f4f1e8;border-radius:1px"></div>
<div class="a" style="left:230.8px;top:404.4px;width:3.2px;height:4px;background:#2a2a2a"></div>
<div class="a" style="left:232px;top:405.4px;width:1.2px;height:1.2px;background:#f4f1e8"></div>
<div class="a" style="left:227.20px;top:412.6px;width:2.9px;height:2.3px;background:#ec7a3c"></div>
<div class="a" style="left:230.60px;top:412.6px;width:2.9px;height:2.3px;background:#f1ecd9"></div>
<div class="a" style="left:234.00px;top:412.6px;width:2.9px;height:2.3px;background:#f1ecd9"></div>
<div class="a" style="left:227.20px;top:415.6px;width:2.9px;height:2.3px;background:#f1ecd9"></div>
<div class="a" style="left:230.60px;top:415.6px;width:2.9px;height:2.3px;background:#f1ecd9"></div>
<div class="a" style="left:234.00px;top:415.6px;width:2.9px;height:2.3px;background:#f1ecd9"></div>
<div class="a" style="left:222.5px;top:419px;width:1.4px;height:1.4px;background:#ddd"></div>
<div class="a" style="left:248.5px;top:399.5px;width:22.5px;height:22.5px;background:#2c2c2c;border-radius:2px"></div>
<div class="a" style="left:250px;top:401.50px;width:19px;height:0.8px;background:#464646"></div>
<div class="a" style="left:250px;top:403.80px;width:19px;height:0.8px;background:#464646"></div>
<div class="a" style="left:250px;top:406.10px;width:19px;height:0.8px;background:#464646"></div>
<div class="a" style="left:250px;top:408.40px;width:19px;height:0.8px;background:#464646"></div>
<div class="a" style="left:248.8px;top:411.8px;width:21.7px;height:8.5px;background:#e27430;border-radius:1px"></div>
<div class="a" style="left:251.20px;top:413.8px;width:3px;height:4.4px;background:#f1ecd9"></div>
<div class="a" style="left:255.80px;top:413.8px;width:3px;height:4.4px;background:#f1ecd9"></div>
<div class="a" style="left:260.40px;top:413.8px;width:3px;height:4.4px;background:#f1ecd9"></div>
<div class="a" style="left:265.00px;top:413.8px;width:3px;height:4.4px;background:#f1ecd9"></div>
<div class="a" style="left:276.5px;top:399.5px;width:20px;height:22.5px;background:#272727;border-radius:2px"></div>
<div class="a" style="left:280px;top:402.4px;width:3.8px;height:14.6px;background:#e27430"></div>
<div class="a" style="left:281px;top:404.4px;width:1.8px;height:10px;background:#f1c9a0"></div>
<div class="a" style="left:284.6px;top:402.4px;width:3.8px;height:14.6px;background:#f1ecd9"></div>
<div class="a" style="left:291.4px;top:402.8px;width:3.5px;height:14.4px;background:#f1ecd9;transform:rotate(-16deg);transform-origin:50% 100%"></div>
<div class="a" style="left:309px;top:398px;width:0.8px;height:22px;background:#353537"></div>
<div class="a" style="left:320.3px;top:399.4px;width:22.2px;height:22.2px;background:#232323;border-radius:2px"></div>
<div class="a" style="left:322.8px;top:402.50px;width:17.2px;height:0.8px;background:#e9e2cc"></div>
<div class="a" style="left:322.8px;top:406.10px;width:17.2px;height:0.8px;background:#e9e2cc"></div>
<div class="a" style="left:322.8px;top:409.70px;width:17.2px;height:0.8px;background:#e9e2cc"></div>
<div class="a" style="left:322.8px;top:413.30px;width:17.2px;height:0.8px;background:#e9e2cc"></div>
<div class="a" style="left:322.8px;top:416.90px;width:17.2px;height:0.8px;background:#e9e2cc"></div>
<div class="a" style="left:323.00px;top:402.5px;width:0.8px;height:14.7px;background:#e9e2cc"></div>
<div class="a" style="left:327.20px;top:402.5px;width:0.8px;height:14.7px;background:#e9e2cc"></div>
<div class="a" style="left:331.40px;top:402.5px;width:0.8px;height:14.7px;background:#e9e2cc"></div>
<div class="a" style="left:335.60px;top:402.5px;width:0.8px;height:14.7px;background:#e9e2cc"></div>
<div class="a" style="left:339.80px;top:402.5px;width:0.8px;height:14.7px;background:#e9e2cc"></div>
<div class="a" style="left:324.2px;top:404.7px;width:2.6px;height:2.6px;border-radius:50%;background:#2ecc71"></div>
<div class="a" style="left:332.7px;top:408.2px;width:2.6px;height:2.6px;border-radius:50%;background:#2ecc71"></div>
<div class="a" style="left:332.7px;top:412.2px;width:2.6px;height:2.6px;border-radius:50%;background:#2ecc71"></div>
<div class="a" style="left:338.2px;top:402.7px;width:2.6px;height:2.6px;border-radius:50%;background:#f4f4f4"></div>
<div class="a" style="left:338.2px;top:414.7px;width:2.6px;height:2.6px;border-radius:50%;background:#f4f4f4"></div>
<div class="a" style="left:324.2px;top:411.7px;width:2.6px;height:2.6px;border-radius:50%;background:#f4f4f4"></div>
<div class="a" style="left:346.8px;top:398.8px;width:24px;height:23.4px;background:#3e8b6c;border-radius:2px"></div>
<svg class="a" style="left:346.8px;top:398.8px" width="24" height="24" viewBox="0 0 24 24"><circle cx="13" cy="10.5" r="5" fill="rgba(255,255,255,0.12)" stroke="#e8f2ec" stroke-width="1.3"/><path d="M16.6 14.2l3.2 3.2" stroke="#f4f4f4" stroke-width="2" stroke-linecap="round"/><path d="M4.5 14A8 8 0 0 1 9 4" fill="none" stroke="#9fd4b6" stroke-width="1.2" stroke-dasharray="1.2 1.4"/></svg>
<div class="a" style="left:381px;top:398px;width:0.8px;height:22px;background:#353537"></div>
<div class="a" style="left:392px;top:399px;width:23.4px;height:23.6px;background:#2e6bc0;border-radius:1.5px"></div>
<div class="a" style="left:395px;top:402.80px;width:17.5px;height:0.8px;background:#e8eef8"></div>
<div class="a" style="left:395px;top:406.00px;width:17.5px;height:0.8px;background:#e8eef8"></div>
<div class="a" style="left:395px;top:409.20px;width:17.5px;height:0.8px;background:#e8eef8"></div>
<div class="a" style="left:395px;top:412.40px;width:17.5px;height:0.8px;background:#e8eef8"></div>
<div class="a" style="left:395px;top:415.60px;width:17.5px;height:0.8px;background:#e8eef8"></div>
<div class="a" style="left:395.00px;top:402.8px;width:0.8px;height:12.8px;background:#e8eef8"></div>
<div class="a" style="left:398.50px;top:402.8px;width:0.8px;height:12.8px;background:#e8eef8"></div>
<div class="a" style="left:402.00px;top:402.8px;width:0.8px;height:12.8px;background:#e8eef8"></div>
<div class="a" style="left:405.50px;top:402.8px;width:0.8px;height:12.8px;background:#e8eef8"></div>
<div class="a" style="left:409.00px;top:402.8px;width:0.8px;height:12.8px;background:#e8eef8"></div>
<div class="a" style="left:412.50px;top:402.8px;width:0.8px;height:12.8px;background:#e8eef8"></div>
<div class="a" style="left:393px;top:418.9px;width:21.4px;height:2.8px;background:#f4f4f6;border-radius:0 0 1px 1px"></div>
<div class="a" style="left:393.6px;top:419.5px;width:2.6px;height:1.6px;background:#222;border-radius:1px"></div>
<div class="a" style="left:419px;top:399px;width:23.4px;height:23.6px;background:#d8472b;border-radius:1.5px"></div>
<div class="a" style="left:422px;top:402.80px;width:17.5px;height:0.8px;background:#f0b0a0"></div>
<div class="a" style="left:422px;top:406.00px;width:17.5px;height:0.8px;background:#f0b0a0"></div>
<div class="a" style="left:422px;top:409.20px;width:17.5px;height:0.8px;background:#f0b0a0"></div>
<div class="a" style="left:422px;top:412.40px;width:17.5px;height:0.8px;background:#f0b0a0"></div>
<div class="a" style="left:422px;top:415.60px;width:17.5px;height:0.8px;background:#f0b0a0"></div>
<div class="a" style="left:422.00px;top:402.8px;width:0.8px;height:12.8px;background:#f0b0a0"></div>
<div class="a" style="left:425.50px;top:402.8px;width:0.8px;height:12.8px;background:#f0b0a0"></div>
<div class="a" style="left:429.00px;top:402.8px;width:0.8px;height:12.8px;background:#f0b0a0"></div>
<div class="a" style="left:432.50px;top:402.8px;width:0.8px;height:12.8px;background:#f0b0a0"></div>
<div class="a" style="left:436.00px;top:402.8px;width:0.8px;height:12.8px;background:#f0b0a0"></div>
<div class="a" style="left:439.50px;top:402.8px;width:0.8px;height:12.8px;background:#f0b0a0"></div>
<div class="a" style="left:420px;top:418.9px;width:21.4px;height:2.8px;background:#f4f4f6;border-radius:0 0 1px 1px"></div>
<div class="a" style="left:420.6px;top:419.5px;width:2.6px;height:1.6px;background:#222;border-radius:1px"></div>
<div class="a" style="left:445.8px;top:399px;width:23.4px;height:23.6px;background:#2e6bc0;border-radius:1.5px"></div>
<div class="a" style="left:448.8px;top:402.80px;width:17.5px;height:0.8px;background:#e8eef8"></div>
<div class="a" style="left:448.8px;top:406.00px;width:17.5px;height:0.8px;background:#e8eef8"></div>
<div class="a" style="left:448.8px;top:409.20px;width:17.5px;height:0.8px;background:#e8eef8"></div>
<div class="a" style="left:448.8px;top:412.40px;width:17.5px;height:0.8px;background:#e8eef8"></div>
<div class="a" style="left:448.8px;top:415.60px;width:17.5px;height:0.8px;background:#e8eef8"></div>
<div class="a" style="left:448.80px;top:402.8px;width:0.8px;height:12.8px;background:#e8eef8"></div>
<div class="a" style="left:452.30px;top:402.8px;width:0.8px;height:12.8px;background:#e8eef8"></div>
<div class="a" style="left:455.80px;top:402.8px;width:0.8px;height:12.8px;background:#e8eef8"></div>
<div class="a" style="left:459.30px;top:402.8px;width:0.8px;height:12.8px;background:#e8eef8"></div>
<div class="a" style="left:462.80px;top:402.8px;width:0.8px;height:12.8px;background:#e8eef8"></div>
<div class="a" style="left:466.30px;top:402.8px;width:0.8px;height:12.8px;background:#e8eef8"></div>
<div class="a" style="left:446.8px;top:418.9px;width:21.4px;height:2.8px;background:#f4f4f6;border-radius:0 0 1px 1px"></div>
<div class="a" style="left:447.40000000000003px;top:419.5px;width:2.6px;height:1.6px;background:#222;border-radius:1px"></div>
<div class="a" style="left:473.6px;top:399px;width:23.4px;height:23.6px;background:#2e6bc0;border-radius:1.5px"></div>
<div class="a" style="left:476.6px;top:402.80px;width:17.5px;height:0.8px;background:#e8eef8"></div>
<div class="a" style="left:476.6px;top:406.00px;width:17.5px;height:0.8px;background:#e8eef8"></div>
<div class="a" style="left:476.6px;top:409.20px;width:17.5px;height:0.8px;background:#e8eef8"></div>
<div class="a" style="left:476.6px;top:412.40px;width:17.5px;height:0.8px;background:#e8eef8"></div>
<div class="a" style="left:476.6px;top:415.60px;width:17.5px;height:0.8px;background:#e8eef8"></div>
<div class="a" style="left:476.60px;top:402.8px;width:0.8px;height:12.8px;background:#e8eef8"></div>
<div class="a" style="left:480.10px;top:402.8px;width:0.8px;height:12.8px;background:#e8eef8"></div>
<div class="a" style="left:483.60px;top:402.8px;width:0.8px;height:12.8px;background:#e8eef8"></div>
<div class="a" style="left:487.10px;top:402.8px;width:0.8px;height:12.8px;background:#e8eef8"></div>
<div class="a" style="left:490.60px;top:402.8px;width:0.8px;height:12.8px;background:#e8eef8"></div>
<div class="a" style="left:494.10px;top:402.8px;width:0.8px;height:12.8px;background:#e8eef8"></div>
<div class="a" style="left:474.6px;top:418.9px;width:21.4px;height:2.8px;background:#f4f4f6;border-radius:0 0 1px 1px"></div>
<div class="a" style="left:475.20000000000005px;top:419.5px;width:2.6px;height:1.6px;background:#222;border-radius:1px"></div>
<div class="a" style="left:502.2px;top:101.6px;width:178.2px;height:29.4px;border-radius:6px;background:linear-gradient(90deg,#e84c62 0%,#ec6878 45%,#e9566c 75%,#e23f5c 100%);box-shadow:0 3px 12px rgba(230,70,95,0.42)"></div>
<div class="a" style="left:512px;top:111.5px;width:6px;height:6px;border-radius:50%;background:#f3a0a8"></div>
<div class="a" style="left:525.6px;top:111.70px;font-size:7.5px;line-height:9.00px;color:#ffffff;font-weight:700;white-space:nowrap;">Échec de la sauvegarde du pupitre.</div>
<svg class="a" style="left:662px;top:113.6px" width="5" height="5" viewBox="0 0 5 5"><path d="M0.5 0.5l4 4M4.5 0.5l-4 4" stroke="#f8d0d4" stroke-width="0.8"/></svg>
<svg class="a" style="left:0;top:423px" width="8" height="8" viewBox="0 0 8 8"><path d="M0 0.5A7.5 7.5 0 0 0 7.5 8H0z" fill="#6b7060"/></svg>
</body></html>
